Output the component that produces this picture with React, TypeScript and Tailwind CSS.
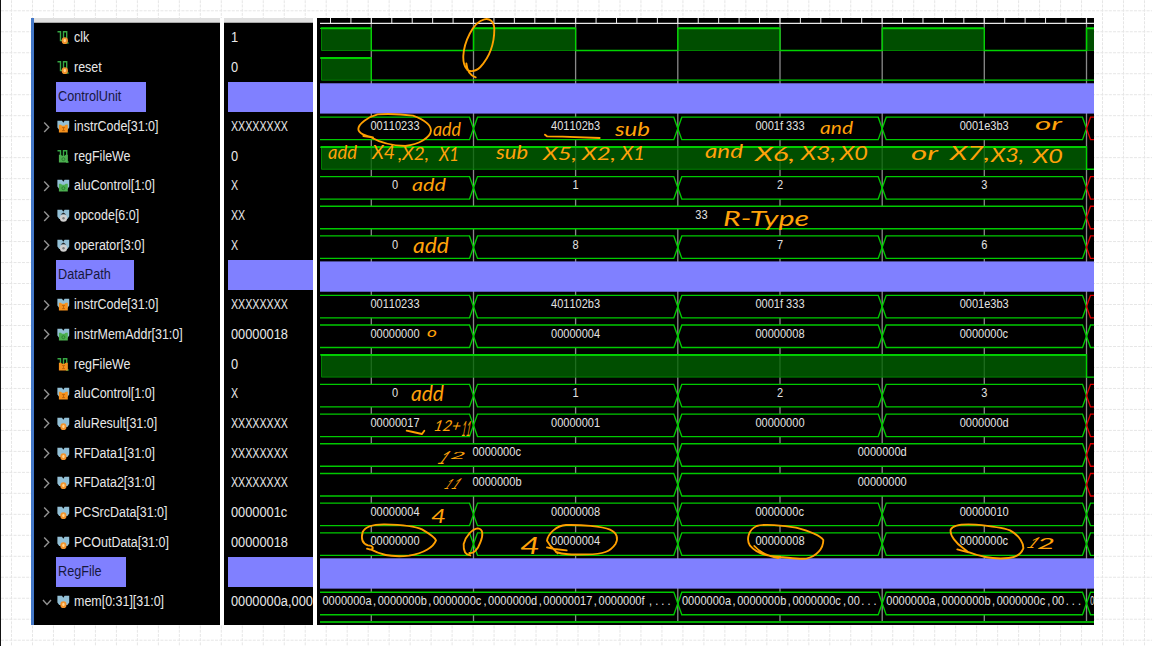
import React from "react";

type Badge = "orangeDot" | "greenBox" | "orangeBox" | "grayDot";
type Bus = { edges: number[]; labels: [number, string][]; unknownTail?: boolean; startLabels?: boolean };
type Row = {
  name: string;
  value: string;
  kind: "scalar" | "bus" | "group";
  badge?: Badge;
  open?: boolean;
  groupWidth?: string;
  high?: [number, number][];
  bus?: Bus;
};

const LEFT = 320;
const RIGHT = 1096;
const T = [371.3, 473.5, 575.6, 677.8, 780, 882.2, 984.3, 1086.5];
const STEPS = [T[1], T[3], T[5], T[7]];
const four = (a: string, b: string, c: string, d: string, unknownTail = true): Bus => ({
  edges: STEPS,
  labels: [[395, a], [575.6, b], [780, c], [984.2, d]],
  unknownTail,
});

const rows: Row[] = [
  { name: "clk", value: "1", kind: "scalar", badge: "orangeDot", high: [[321, T[0]], [T[1], T[2]], [T[3], T[4]], [T[5], T[6]], [T[7], RIGHT]] },
  { name: "reset", value: "0", kind: "scalar", badge: "orangeDot", high: [[321, T[0]]] },
  { name: "ControlUnit", value: "", kind: "group", groupWidth: "w-[90px]" },
  { name: "instrCode[31:0]", value: "XXXXXXXX", kind: "bus", badge: "orangeBox", bus: four("00110233", "401102b3", "0001f333", "0001e3b3") },
  { name: "regFileWe", value: "0", kind: "scalar", badge: "greenBox", high: [[321, T[7]]] },
  { name: "aluControl[1:0]", value: "X", kind: "bus", badge: "greenBox", bus: four("0", "1", "2", "3") },
  { name: "opcode[6:0]", value: "XX", kind: "bus", badge: "grayDot", bus: { edges: [T[7]], labels: [[701.5, "33"]], unknownTail: true } },
  { name: "operator[3:0]", value: "X", kind: "bus", badge: "grayDot", bus: four("0", "8", "7", "6") },
  { name: "DataPath", value: "", kind: "group", groupWidth: "w-[78px]" },
  { name: "instrCode[31:0]", value: "XXXXXXXX", kind: "bus", badge: "orangeBox", bus: four("00110233", "401102b3", "0001f333", "0001e3b3") },
  { name: "instrMemAddr[31:0]", value: "00000018", kind: "bus", badge: "greenBox", bus: four("00000000", "00000004", "00000008", "0000000c", false) },
  { name: "regFileWe", value: "0", kind: "scalar", badge: "orangeBox", high: [[321, T[7]]] },
  { name: "aluControl[1:0]", value: "X", kind: "bus", badge: "orangeBox", bus: four("0", "1", "2", "3") },
  { name: "aluResult[31:0]", value: "XXXXXXXX", kind: "bus", badge: "orangeDot", bus: four("00000017", "00000001", "00000000", "0000000d") },
  { name: "RFData1[31:0]", value: "XXXXXXXX", kind: "bus", badge: "orangeDot", bus: { edges: [T[3], T[7]], labels: [[497, "0000000c"], [882.2, "0000000d"]], unknownTail: true } },
  { name: "RFData2[31:0]", value: "XXXXXXXX", kind: "bus", badge: "orangeDot", bus: { edges: [T[3], T[7]], labels: [[497, "0000000b"], [882.2, "00000000"]], unknownTail: true } },
  { name: "PCSrcData[31:0]", value: "0000001c", kind: "bus", badge: "orangeDot", bus: four("00000004", "00000008", "0000000c", "00000010", false) },
  { name: "PCOutData[31:0]", value: "00000018", kind: "bus", badge: "orangeDot", bus: four("00000000", "00000004", "00000008", "0000000c", false) },
  { name: "RegFile", value: "", kind: "group", groupWidth: "w-[70px]" },
  {
    name: "mem[0:31][31:0]",
    value: "0000000a,000",
    kind: "bus",
    badge: "orangeDot",
    open: true,
    bus: {
      edges: [T[3], T[5], T[7]],
      startLabels: true,
      labels: [
        [322.5, "0000000a,0000000b,0000000c,0000000d,00000017,0000000f,..."],
        [682, "0000000a,0000000b,0000000c,00..."],
        [886.3, "0000000a,0000000b,0000000c,00..."],
        [1090.3, "0"],
      ],
    },
  },
];

const PITCH = 29.69;
const rowTop = (i: number) => 22.6 + PITCH * i;

function SignalIcon({ kind, badge }: { kind: "scalar" | "bus"; badge?: Badge }) {
  return (
    <svg className="h-[15px] w-[13px] shrink-0" viewBox="0 0 13 15">
      {kind === "scalar" ? (
        <path d="M.5 1.7H3.5V10.5H6.5V1.7H9.7V13H11.6" fill="none" stroke="#36a844" strokeWidth="1.4" />
      ) : (
        <path d="M.4 1.7H5L6.3 3.8 7.6 1.7H12.2V8.6L10.4 11H2.2L.4 8.6Z" fill="#93c0d6" />
      )}
      {badge === "orangeDot" && (
        <g>
          <ellipse cx={kind === "scalar" ? 7.8 : 6.4} cy="10.7" rx="3.1" ry="3.4" fill="#f3922b" />
          <ellipse cx={kind === "scalar" ? 7.8 : 6.4} cy="10.5" rx="1.2" ry="1.7" fill="#ffd38f" />
        </g>
      )}
      {badge === "grayDot" && (
        <g>
          <path d="M3.6 6.5L6.4 4.6 9.2 6.5Z" fill="#222" />
          <circle cx="6.5" cy="10.2" r="3.6" fill="#cfcfcf" />
          <circle cx="6.5" cy="10.2" r="1.2" fill="#7d7d7d" />
        </g>
      )}
      {badge === "orangeBox" && (
        <g>
          <path d="M1.9 5.8H4L5 6.8H7.6L8.6 5.8H10.8V13.4H1.9Z" fill="#f5921e" />
          <path d="M5 8.6H8M6.5 8.6V11.6M5 11.6H8" stroke="#b65e08" strokeWidth=".8" fill="none" />
        </g>
      )}
      {badge === "greenBox" && (
        <g>
          <path d="M1.9 5.8H4L5 6.8H7.6L8.6 5.8H10.8V13.4H1.9Z" fill="#4caf50" />
          <circle cx="6.4" cy="10.2" r="1.5" fill="none" stroke="#25752a" strokeWidth=".8" />
        </g>
      )}
    </svg>
  );
}

function NameRow({ row }: { row: Row }) {
  if (row.kind === "group") {
    return (
      <div className="flex h-[29.69px] shrink-0 pl-[22px]">
        <div className={`flex items-center bg-[#8080ff] pb-px pl-[1.5px] text-[#17173d] ${row.groupWidth}`}>
          <span className="origin-left scale-x-[0.905] whitespace-nowrap">{row.name}</span>
        </div>
      </div>
    );
  }
  return (
    <div className="flex h-[29.69px] shrink-0 items-center">
      <div className="flex w-[23px] shrink-0 justify-center pr-[1px] pl-[3px]">
        {row.kind === "bus" && (
          <svg className="h-3 w-[10px]" viewBox="0 0 10 12">
            <path d={row.open ? "M1 4L5 8.5 9 4" : "M2.2 1.5L6.8 6.3 2.2 11"} fill="none" stroke="#929292" strokeWidth="1.4" />
          </svg>
        )}
      </div>
      <SignalIcon kind={row.kind} badge={row.badge} />
      <span className="ml-[4px] origin-left scale-x-[0.89] pb-px whitespace-nowrap">{row.name}</span>
    </div>
  );
}

function ValueRow({ row }: { row: Row }) {
  if (row.kind === "group") {
    return (
      <div className="flex h-[29.69px] shrink-0 pl-1">
        <div className="flex-1 bg-[#8080ff]" />
      </div>
    );
  }
  const unknown = row.value.startsWith("X");
  return (
    <div className="flex h-[29.69px] shrink-0 items-center pb-px pl-[7px]">
      <span className={`origin-left whitespace-nowrap ${unknown ? "scale-x-[0.762]" : "scale-x-[0.915]"}`}>{row.value}</span>
    </div>
  );
}

function BusText({ x, y, text, start }: { x: number; y: number; text: string; start?: boolean }) {
  const step = 6.667;
  const scale = text.length === 1 && start ? 0.6 : 0.92;
  const origin = start ? x : x - (text.length * step * scale) / 2;
  const xs = Array.from(text, (c, i) => i * step + (c === "," || c === "." ? 1.6 : 0)).join(" ");
  return (
    <text transform={`translate(${origin} ${y}) scale(${scale} 1)`} x={xs} y="0" fontSize="12" fill="#e2e2e2">
      {text}
    </text>
  );
}

function ScalarWave({ y, high }: { y: number; high: [number, number][] }) {
  const hi = y + 5.7;
  const lo = y + 27.9;
  let d = "";
  let at = LEFT;
  high.forEach(([a, b], i) => {
    if (i === 0) d += `M${LEFT} ${hi}`;
    else d += `H${a}V${hi}`;
    d += `H${b}`;
    if (b < RIGHT) d += `V${lo}`;
    at = b;
  });
  if (at < RIGHT) d += `H${RIGHT}`;
  return (
    <g>
      {high.map(([a, b]) => (
        <g key={a}>
          <rect x={a} y={hi} width={b - a} height={lo - hi} fill="#006400" fillOpacity=".78" />
          <path d={`M${a + 0.5} ${hi}V${lo}H${b}`} fill="none" stroke="#008000" strokeWidth="1" />
          <path d={`M${a} ${hi}H${b}`} stroke="#00c400" strokeWidth="2" />
        </g>
      ))}
      <path d={d} fill="none" stroke="#00d400" strokeWidth="1.3" />
    </g>
  );
}

function BusWave({ y, bus }: { y: number; bus: Bus }) {
  const top = y + 5.5;
  const bot = y + 28;
  const mid = (top + bot) / 2;
  const stops = [LEFT - 10, ...bus.edges, RIGHT + 20];
  return (
    <g>
      {stops.slice(0, -1).map((a, i) => {
        const b = stops[i + 1];
        const tail = i === stops.length - 2 && bus.unknownTail;
        return (
          <g key={a}>
            <path d={`M${Math.max(a + 4, LEFT)} ${top}H${b - 4}V${bot}H${Math.max(a + 4, LEFT)}Z`} fill="#000" />
            <path
              d={
                i === 0
                  ? `M${LEFT} ${top}H${b - 4}L${b} ${mid}L${b - 4} ${bot}H${LEFT}`
                  : `M${a} ${mid}L${a + 4} ${top}H${b - 4}L${b} ${mid}L${b - 4} ${bot}H${a + 4}Z`
              }
              fill="none"
              stroke={tail ? "#e00000" : "#00ca00"}
              strokeWidth="1.35"
            />
          </g>
        );
      })}
      {bus.labels.map(([x, t]) => (
        <BusText key={x} x={x} y={y + 18.1} text={t} start={bus.startLabels} />
      ))}
    </g>
  );
}

// text, x, baseline, width, font size, slant in degrees
const notes: [string, number, number, number, number, number][] = [
  ["add", 433, 136, 28, 20, 0],
  ["sub", 615, 136, 35, 20, 0],
  ["and", 820, 134, 33, 18, 0],
  ["or", 1035, 130, 27, 18, 0],
  ["add", 328, 159, 29, 20, 0],
  ["X4", 372, 159, 23, 19, 0],
  [",X2,", 398, 160, 31, 18, 0],
  ["X1", 439, 161, 20, 20, 0],
  ["sub", 496, 159, 32, 20, 0],
  ["X5,", 543, 160, 34, 18, 0],
  ["X2,", 582, 160, 34, 18, 0],
  ["X1", 621, 160, 24, 20, 0],
  ["and", 705, 158, 38, 19, 0],
  ["X6,", 755, 161, 40, 19, 0],
  ["X3,", 801, 160, 35, 19, 0],
  ["X0", 840, 160, 28, 19, 0],
  ["or", 911, 160, 27, 20, 0],
  ["X7,", 950, 160, 40, 19, 0],
  ["X3,", 991, 162, 33, 20, 0],
  ["X0", 1033, 163, 30, 19, 0],
  ["add", 412, 191, 34, 17, 0],
  ["R-Type", 723, 226, 86, 21, 0],
  ["add", 413, 253, 36, 22, 0],
  ["o", 427, 337, 10, 14, 0],
  ["add", 411, 401, 33, 21, 0],
  ["12+", 433, 431, 27, 15, 12],
  ["11", 461, 436, 9, 21, 8],
  ["1", 436, 464, 9, 18, 32],
  ["2", 450, 459, 15, 10, 10],
  ["1", 443, 489, 6, 14, 32],
  ["1", 450, 489, 7, 15, 32],
  ["4", 431, 523, 15, 20, 0],
  ["4", 520, 554, 20, 24, 0],
  ["1", 1025, 548, 10, 15, 35],
  ["2", 1037, 549, 18, 15, 0],
];

function Annotations() {
  return (
    <g>
      <g className="font-['Lato',sans-serif] italic" fill="#ffa20a">
        {notes.map(([text, x, y, width, size, slant]) => (
          <text
            key={`${x}-${y}`}
            transform={`translate(${x} ${y}) skewX(${-slant})`}
            fontSize={size}
            textLength={width}
            lengthAdjust="spacingAndGlyphs"
          >
            {text}
          </text>
        ))}
      </g>
      <g fill="none" stroke="#ffa000" strokeWidth="5.6" strokeLinecap="round" strokeLinejoin="round">
        <g transform="translate(310 10) scale(.33333)">
          <path d="M497 202C485 198 472 190 469 160M472 180C487 187 501 181 511 171C535 145 553 105 553 57C552 34 539 24 523 28C488 36 462 99 460 137C459 157 464 170 470 177" />
          <path d="M189 382C167 380 145 369 145 357C145 342 174 320 203 313C237 311 278 313 309 317C339 328 363 344 363 362C361 384 325 403 286 408C247 407 207 396 181 381L160 378" />
          <path d="M705 374L711 379L757 380L869 384" />
        </g>
        <g transform="translate(310 350) scale(.33333)">
          <path d="M290 242L309 246L336 252L343 242" />
        </g>
        <g transform="translate(310 490) scale(.33333)">
          <path d="M171 176L181 179C195 177 188 166 174 166C157 161 153 145 158 126C166 110 191 103 221 103C258 104 308 105 336 118C360 132 375 142 378 151C371 170 343 190 297 197C251 202 209 193 184 179" />
          <path d="M481 196C465 195 460 180 461 162C467 137 487 117 503 115C520 116 520 136 511 157C503 180 490 192 478 189" />
          <path d="M770 181L733 177L711 172M743 190L720 166L711 152C714 131 740 106 768 105C812 104 876 108 900 119C922 129 925 145 917 161C901 185 880 193 831 193C783 194 760 194 738 186" />
        </g>
        <g transform="translate(600 490) scale(.33333)">
          <path d="M463 168C482 190 508 200 535 204M541 200C503 200 468 188 450 167C438 149 445 119 470 108C491 101 550 106 588 113C630 124 661 137 670 150C670 176 650 199 619 206C591 208 561 202 537 201" />
        </g>
        <g transform="translate(860 490) scale(.33333)">
          <path d="M292 178L325 187L309 174C288 159 269 136 272 119C279 103 316 102 347 104C389 108 433 115 450 121C480 137 491 162 490 175C483 193 467 202 446 204C403 209 358 199 319 184" />
        </g>
      </g>
    </g>
  );
}

function WavePanel() {
  return (
    <svg className="block h-[607px] w-[777px] bg-black font-['Liberation_Sans',Arial,sans-serif]" viewBox="317 18 777 607">
      {T.map((x) => (
        <path key={x} d={`M${x} 18V622`} stroke="#8a8a8a" strokeWidth="1.3" />
      ))}
      {Array.from({ length: 38 }, (_, i) => (
        <path key={i} d={`M${330.5 + i * 20.43} 18V23`} stroke="#ededed" strokeWidth="1" />
      ))}
      <path d="M320 23.4H1094" stroke="#e8e8e8" strokeWidth="1.1" />
      {rows.map((row, i) => {
        const y = rowTop(i);
        if (row.kind === "group") return <rect key={i} x={LEFT} y={y + 1.3} width="776" height="30.3" fill="#8080ff" />;
        if (row.high) return <ScalarWave key={i} y={y} high={row.high} />;
        return row.bus ? <BusWave key={i} y={y} bus={row.bus} /> : null;
      })}
      <path d="M320 622H1094" stroke="#00a800" strokeWidth="1.8" />
      <Annotations />
    </svg>
  );
}

function GridBackdrop() {
  return (
    <svg className="absolute inset-0 h-full w-full" viewBox="0 0 1152 646">
      <g stroke="#e6e6e6" strokeWidth="1" strokeDasharray="3 1.2">
        {Array.from({ length: 55 }, (_, i) => (
          <path key={`v${i}`} d={`M${10.5 + i * 21} 0V646`} />
        ))}
        {Array.from({ length: 31 }, (_, i) => (
          <path key={`h${i}`} d={`M0 ${10.5 + i * 21}H1152`} />
        ))}
      </g>
    </svg>
  );
}

export default function App() {
  return (
    <main className="relative h-[646px] w-[1152px] overflow-hidden border-l border-[#111] bg-white pt-[18px] pl-[30px]">
      <GridBackdrop />
      <div className="relative flex h-[607px] w-[1063px] bg-white font-['Liberation_Sans',Arial,sans-serif] text-[14px] leading-none text-[#e8e8e8]">
        <section className="flex w-[189px] shrink-0 flex-col overflow-hidden border-l-[3px] border-[#4478c8] bg-black">
          <div className="h-[4.6px] shrink-0 border-b border-[#a8a8a8] bg-[#e0e0e0]" />
          {rows.map((row, i) => (
            <NameRow key={i} row={row} />
          ))}
        </section>
        <section className="ml-1 flex w-[89px] shrink-0 flex-col overflow-hidden bg-black">
          <div className="h-[4.6px] shrink-0 border-b border-[#a8a8a8] bg-[#e0e0e0]" />
          {rows.map((row, i) => (
            <ValueRow key={i} row={row} />
          ))}
        </section>
        <section className="ml-1 shrink-0 overflow-hidden">
          <WavePanel />
        </section>
      </div>
    </main>
  );
}
